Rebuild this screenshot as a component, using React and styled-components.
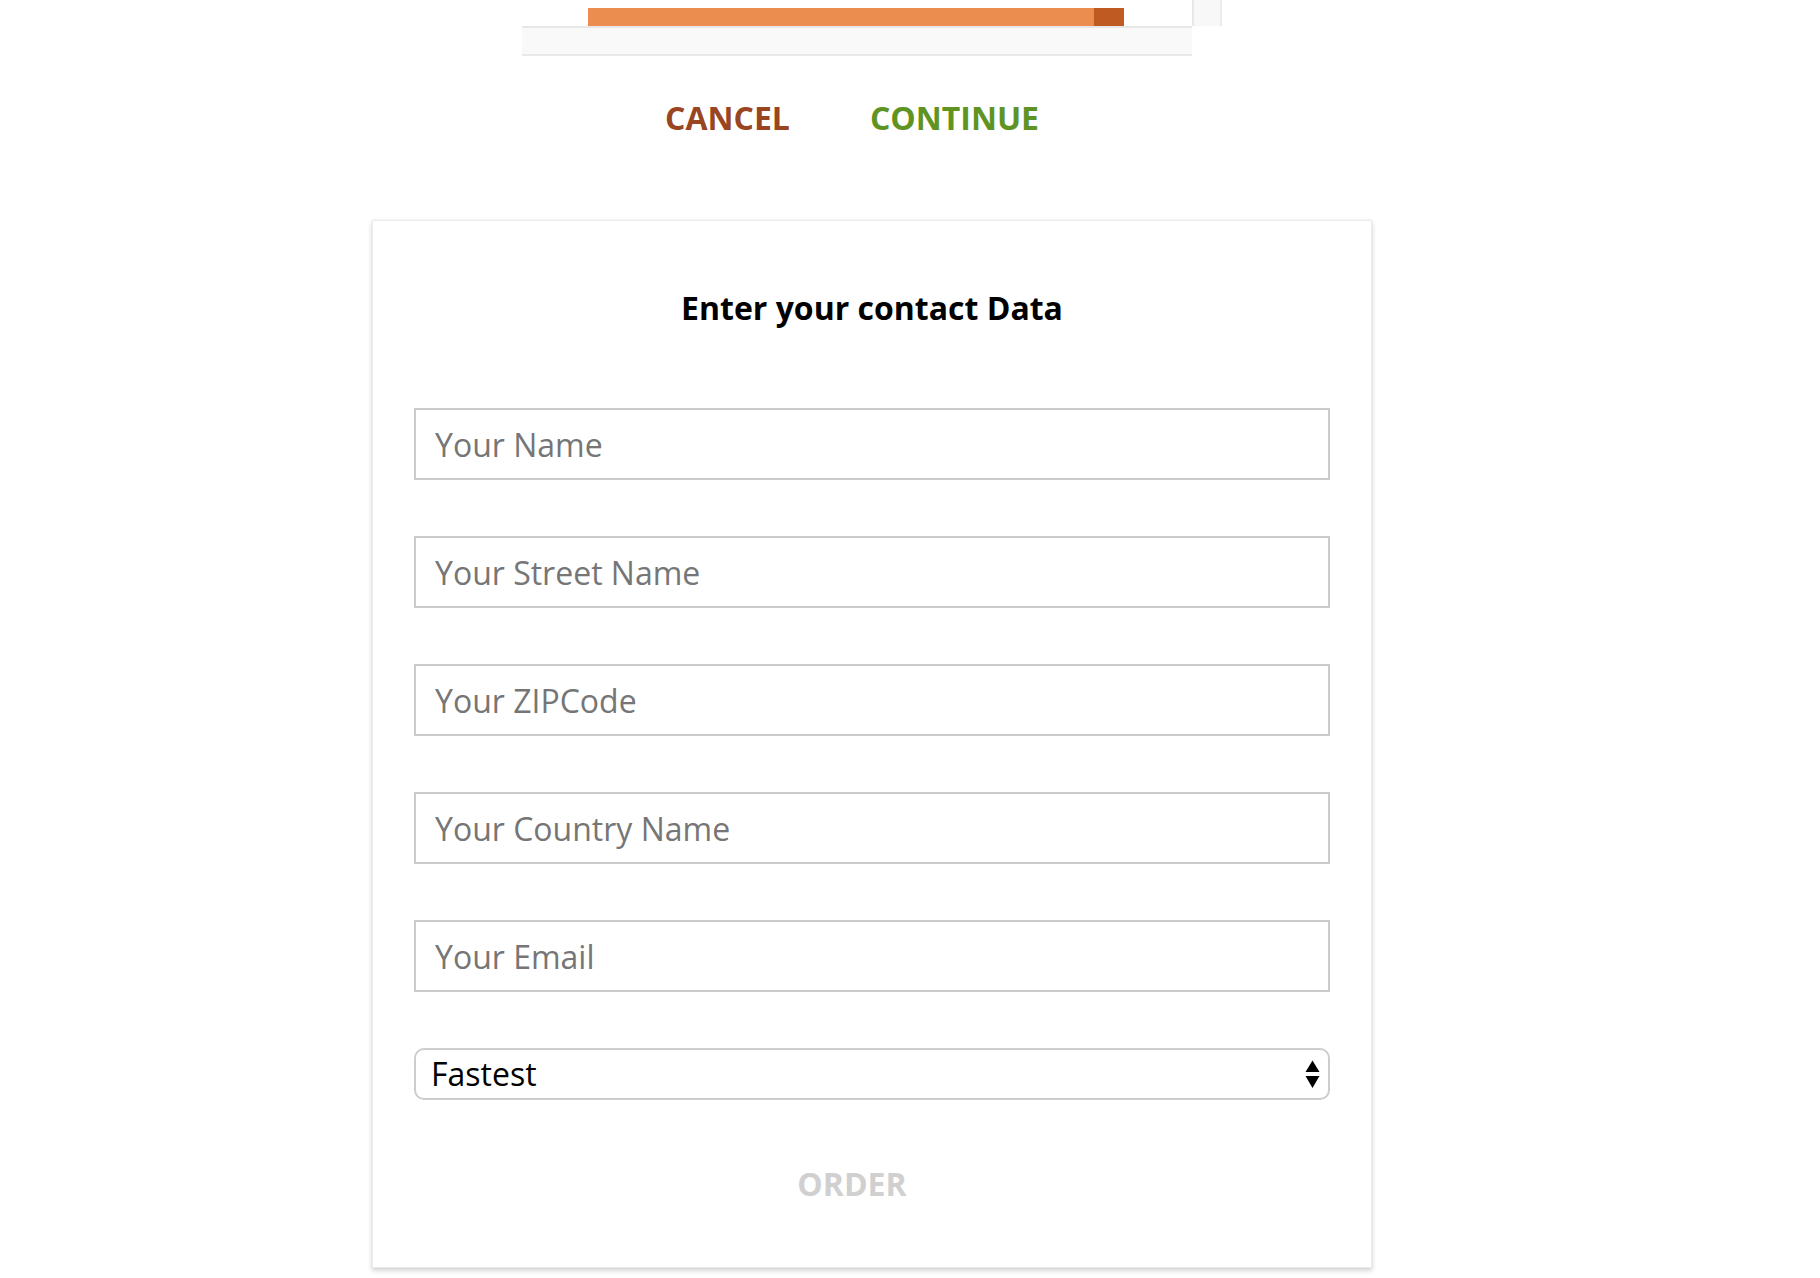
import React from "react";
import styled, { createGlobalStyle } from "styled-components";

const GlobalStyle = createGlobalStyle`
  html, body {
    margin: 0;
    padding: 0;
    background: #ffffff;
    font-family: "Open Sans", "Liberation Sans", sans-serif;
  }
  * { box-sizing: border-box; }
`;

const Page = styled.div`
  display: flex;
  flex-direction: column;
  align-items: flex-start;
  min-height: 1278px;
`;

const ScrollArea = styled.div`
  margin-left: 522px;
  width: 700px;
  display: grid;
  grid-template-columns: 1fr 30px;
  grid-template-rows: 26px 30px;
`;

const Viewport = styled.div`
  overflow: hidden;
  padding: 8px 0 0 66px;
`;

const Bar = styled.div`
  display: flex;
  width: 536px;
  height: 18px;
`;

const BarFill = styled.div`
  flex: 1;
  background: #ec8d50;
`;

const BarEnd = styled.div`
  width: 30px;
  background: #bf5a22;
`;

const VTrack = styled.div`
  background: #f8f8f8;
  border-left: 2px solid #e8e8e8;
  border-right: 2px solid #ececec;
`;

const HTrack = styled.div`
  background: #f9f9f9;
  border-top: 2px solid #e7e7e7;
  border-bottom: 2px solid #e8e8e8;
`;

const Corner = styled.div``;

const Actions = styled.div`
  margin-top: 40px;
  margin-left: 665px;
  display: flex;
  gap: 80px;
`;

const TextButton = styled.button`
  background: none;
  border: none;
  padding: 0;
  margin: 0;
  font-family: "Open Sans", "Liberation Sans", sans-serif;
  font-weight: 700;
  font-size: 32px;
  line-height: 44px;
  letter-spacing: 0;
  cursor: pointer;
  color: ${(p) => p.$color};
`;

const Card = styled.div`
  margin-top: 80px;
  margin-left: 372px;
  width: 1000px;
  border: 1px solid #ececec;
  box-shadow: 0 3px 5px rgba(0, 0, 0, 0.16), 0 0 2px rgba(0, 0, 0, 0.08);
  background: #fff;
  padding: 65px 41px 61px;
  display: flex;
  flex-direction: column;
`;

const Title = styled.h2`
  margin: 0;
  text-align: center;
  font-size: 32px;
  line-height: 44px;
  font-weight: 700;
  color: #000;
`;

const Form = styled.form`
  margin-top: 78px;
  display: flex;
  flex-direction: column;
  gap: 56px;
`;

const TextInput = styled.input`
  display: block;
  width: 100%;
  height: 72px;
  border: 2px solid #cbcbcb;
  border-radius: 0;
  padding: 0 19px;
  font-family: "Open Sans", "Liberation Sans", sans-serif;
  font-size: 32px;
  color: #333;
  background: #fff;
  outline: none;
  &::placeholder {
    color: #767676;
    opacity: 1;
  }
`;

const SelectWrap = styled.div`
  position: relative;
  height: 52px;
`;

const Select = styled.select`
  appearance: none;
  -webkit-appearance: none;
  display: block;
  width: 100%;
  height: 52px;
  border: 2px solid #cdcdcd;
  border-radius: 10px;
  background: #fff;
  padding: 0 40px 0 15px;
  font-family: "Open Sans", "Liberation Sans", sans-serif;
  font-size: 32px;
  line-height: 48px;
  color: #000;
  outline: none;
`;

const Arrows = styled.svg`
  position: absolute;
  right: 10px;
  top: 12px;
  width: 15px;
  height: 30px;
  pointer-events: none;
`;

const OrderRow = styled.div`
  margin-top: 62px;
  display: flex;
  justify-content: center;
  padding-right: 40px;
`;

const OrderButton = styled(TextButton)`
  color: #d0d0d0;
  cursor: default;
`;

export default function App() {
  return (
    <>
      <GlobalStyle />
      <Page>
        <ScrollArea>
          <Viewport>
            <Bar>
              <BarFill />
              <BarEnd />
            </Bar>
          </Viewport>
          <VTrack />
          <HTrack />
          <Corner />
        </ScrollArea>

        <Actions>
          <TextButton $color="#9a4522">CANCEL</TextButton>
          <TextButton $color="#5f9422">CONTINUE</TextButton>
        </Actions>

        <Card>
          <Title>Enter your contact Data</Title>
          <Form onSubmit={(e) => e.preventDefault()}>
            <TextInput placeholder="Your Name" />
            <TextInput placeholder="Your Street Name" />
            <TextInput placeholder="Your ZIPCode" />
            <TextInput placeholder="Your Country Name" />
            <TextInput placeholder="Your Email" />
            <SelectWrap>
              <Select defaultValue="fastest">
                <option value="fastest">Fastest</option>
                <option value="cheapest">Cheapest</option>
              </Select>
              <Arrows viewBox="0 0 15 30">
                <polygon points="7.5,0.5 14.5,12 0.5,12" fill="#000" />
                <polygon points="0.5,16 14.5,16 7.5,28" fill="#000" />
              </Arrows>
            </SelectWrap>
          </Form>
          <OrderRow>
            <OrderButton disabled>ORDER</OrderButton>
          </OrderRow>
        </Card>
      </Page>
    </>
  );
}
